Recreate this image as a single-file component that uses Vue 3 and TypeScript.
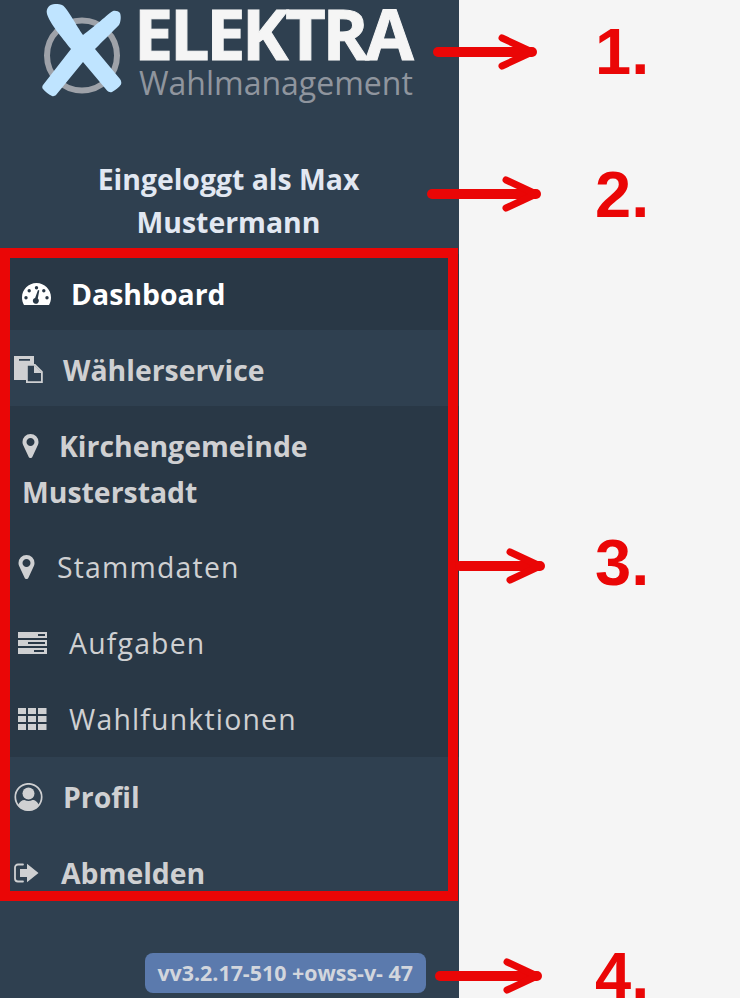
<script setup lang="ts">
const arrows: { x1: number; x2: number; y: number }[] = [
  { x1: 438, x2: 532, y: 52 },
  { x1: 432, x2: 536, y: 194 },
  { x1: 460, x2: 540, y: 566 },
  { x1: 440, x2: 537, y: 976 },
]
const marks: { label: string; top: number }[] = [
  { label: '1.', top: 14 },
  { label: '2.', top: 157 },
  { label: '3.', top: 525 },
  { label: '4.', top: 938 },
]
</script>

<template>
  <div class="page">
    <aside class="sidebar">
      <header class="brand">
        <svg class="brand-mark" viewBox="0 0 80 96" width="80" height="96" aria-hidden="true">
          <circle cx="40" cy="53.500" r="35" fill="none" stroke="#9ea2a9" stroke-width="6" />
          <path fill="#bfe4ff" d="M5 12C3.500 6 8 2 13 2c3 0 6 .3 8 1.500 4 2.500 14 21 20 29.500l12 14 25 30c1.500 2 1.500 4 1 5.500-2 3-6 6-9 7.500-2 .5-3.500 0-5-1.500L41 60 29 47C20 36 7 20 5 12Z" />
          <path fill="#bfe4ff" d="M78 11c-1.500-2-4.500-2.500-7-2-4 2-20 17-30 24L29 47 1 83c-1 1.500-1 3 0 4 2 2.500 6 5.500 9 7 1.500.5 3 0 4-1l27-33 12-13c8-8 19-19 24-24 1.500-2.500 2.500-8 1-12Z" />
        </svg>
        <div class="brand-text">
          <div class="brand-name">ELEKTRA</div>
          <div class="brand-sub">Wahlmanagement</div>
        </div>
      </header>

      <p class="login">Eingeloggt als Max Mustermann</p>

      <nav class="nav">
        <a class="item item-active item-first">
          <svg class="ico ico-gauge" viewBox="0 0 29 22" width="29" height="22" aria-hidden="true">
            <path fill-rule="evenodd" fill="#fff" d="M14.500 0C6.500 0 0 6.500 0 14.500c0 2.800.7 5.400 2 7.500h25c1.300-2.100 2-4.700 2-7.500C29 6.500 22.500 0 14.500 0ZM14.500 3a1.700 1.700 0 1 1 0 3.400 1.700 1.700 0 0 1 0-3.400ZM7.200 6a1.700 1.700 0 1 1 0 3.400 1.700 1.700 0 0 1 0-3.400ZM21.800 6a1.700 1.700 0 1 1 0 3.400 1.700 1.700 0 0 1 0-3.400ZM4 13a1.700 1.700 0 1 1 0 3.400A1.700 1.700 0 0 1 4 13ZM25 13a1.700 1.700 0 1 1 0 3.400 1.700 1.700 0 0 1 0-3.400ZM16 7l1.300.4-1.500 8.100a3 3 0 1 1-2.700-.6L16 7Z" />
          </svg>
          <span>Dashboard</span>
        </a>
        <a class="item item-files">
          <svg class="ico" viewBox="0 0 29 28" width="29" height="28" aria-hidden="true">
            <path fill="#cfd0d2" fill-rule="evenodd" d="M0 0h20v8h-8v16H0ZM5 3v1.800h11V3Z" />
            <path fill="none" stroke="#cfd0d2" stroke-width="1.800" d="M12.900 8.900h8l7 7v10.200h-15Z" />
            <path fill="#cfd0d2" d="M20 9l8 8h-8Z" />
          </svg>
          <span>Wählerservice</span>
        </a>
        <div class="group">
          <a class="item item-title">
            <svg class="ico-inline" viewBox="0 128 1024 1536" width="17" height="24" aria-hidden="true">
              <path fill="#cfd0d2" d="M768 640q0-106-75-181t-181-75-181 75-75 181 75 181 181 75 181-75 75-181zm256 0q0 109-33 179l-364 774q-16 33-47.500 52t-67.500 19-67.500-19-46.500-52l-365-774q-33-70-33-179 0-212 150-362t362-150 362 150 150 362z" />
            </svg><span class="title-text">Kirchengemeinde Musterstadt</span>
          </a>
          <a class="sub sub-pin">
            <svg class="ico" viewBox="0 128 1024 1536" width="17" height="24" aria-hidden="true">
              <path fill="#cfd0d2" d="M768 640q0-106-75-181t-181-75-181 75-75 181 75 181 181 75 181-75 75-181zm256 0q0 109-33 179l-364 774q-16 33-47.500 52t-67.500 19-67.500-19-46.500-52l-365-774q-33-70-33-179 0-212 150-362t362-150 362 150 150 362z" />
            </svg>
            <span>Stammdaten</span>
          </a>
          <a class="sub">
            <svg class="ico" viewBox="0 0 29 22" width="29" height="22" aria-hidden="true">
              <path fill="#cfd0d2" fill-rule="evenodd" d="M0 0h29v6H0ZM20 2v2h7V2ZM0 8h29v6H0ZM10 10v2h17v-2ZM0 16h29v6H0ZM16 18v2h10v-2Z" />
            </svg>
            <span>Aufgaben</span>
          </a>
          <a class="sub">
            <svg class="ico" viewBox="0 0 29 22" width="29" height="22" aria-hidden="true">
              <path fill="#cfd0d2" d="M0 0h8v6H0ZM10 0h8v6h-8ZM20 0h8.500v6H20ZM0 8h8v6H0ZM10 8h8v6h-8ZM20 8h8.500v6H20ZM0 16h8v6H0ZM10 16h8v6h-8ZM20 16h8.500v6H20Z" />
            </svg>
            <span>Wahlfunktionen</span>
          </a>
        </div>
        <a class="item item-profile">
          <svg class="ico" viewBox="0 0 29 28" width="29" height="28" aria-hidden="true">
            <circle cx="14.500" cy="14" r="13.200" fill="none" stroke="#cfd0d2" stroke-width="1.700" />
            <circle cx="14.500" cy="10.500" r="6" fill="#cfd0d2" />
            <path fill="#cfd0d2" d="M4 22.500c1-3.500 4-5.500 6.500-5.500 2.500 1.400 5.500 1.400 8 0 2.500 0 5.500 2 6.500 5.500-2.500 3-6 4.800-10.500 4.800S6.500 25.500 4 22.500Z" />
          </svg>
          <span>Profil</span>
        </a>
        <a class="item item-logout">
          <svg class="ico" viewBox="0 0 25 20" width="25" height="20" aria-hidden="true">
            <path fill="none" stroke="#cfd0d2" stroke-width="1.800" stroke-linecap="round" d="M9 1.500H4A3 3 0 0 0 1 4.500v11a3 3 0 0 0 3 3h5" />
            <path fill="#cfd0d2" d="M6 6h7V0.800L24.500 10 13 19.200V14H6Z" />
          </svg>
          <span>Abmelden</span>
        </a>
      </nav>

      <footer class="footer">
        <span class="version">vv3.2.17-510 +owss-v- 47</span>
      </footer>
    </aside>

    <div class="red-box" aria-hidden="true"></div>
    <svg class="arrows" viewBox="0 0 740 998" width="740" height="998" aria-hidden="true">
      <g v-for="a in arrows" :key="a.y" fill="none" stroke="#ea0606" stroke-linecap="round" stroke-linejoin="round">
        <path :d="`M${a.x1} ${a.y}H${a.x2}`" stroke-width="10" />
        <path :d="`M${a.x2 - 30} ${a.y - 14}L${a.x2} ${a.y}L${a.x2 - 30} ${a.y + 14}`" stroke-width="7" />
      </g>
    </svg>
    <span v-for="m in marks" :key="m.label" class="mark" :style="{ top: m.top + 'px' }">{{ m.label }}</span>
  </div>
</template>

<style scoped>
.page {
  position: relative;
  width: 740px;
  height: 998px;
  overflow: hidden;
  background: #f5f5f5;
  font-family: "Open Sans", "Liberation Sans", sans-serif;
}
.sidebar {
  display: flex;
  flex-direction: column;
  width: 459px;
  height: 998px;
  background: #2f4050;
}
.brand {
  display: flex;
  align-items: flex-start;
  height: 112px;
  padding-left: 42px;
  box-sizing: border-box;
}
.brand-mark {
  flex: none;
  margin-top: 2px;
}
.brand-text {
  margin-left: 12px;
}
.brand-name {
  margin-top: 3px;
  font-size: 70px;
  line-height: 60px;
  font-weight: 700;
  letter-spacing: -3.300px;
  color: #f5f5f5;
  -webkit-text-stroke: 1px #f5f5f5;
}
.brand-sub {
  margin-left: 5px;
  font-size: 32px;
  line-height: 40px;
  color: #8f959e;
}
.login {
  margin: 46px 0 0 78.500px;
  width: 300px;
  height: 96px;
  text-align: center;
  font-size: 28.400px;
  line-height: 43px;
  font-weight: 700;
  color: #e2e8f2;
}
.nav {
  display: flex;
  flex-direction: column;
}
.item {
  display: flex;
  align-items: center;
  height: 76px;
  padding-top: 3px;
  box-sizing: border-box;
  font-size: 28.400px;
  font-weight: 700;
  color: #cfd0d2;
}
.item-active {
  background: #293846;
  color: #fff;
}
.item-first {
  padding-left: 22px;
}
.item-first .ico {
  margin-right: 20px;
}
.item-files {
  padding-left: 14px;
}
.item-files .ico {
  margin-right: 20px;
}
.group {
  background: #293846;
  height: 351px;
}
.item-title {
  display: block;
  height: auto;
  width: 420px;
  padding: 17px 0 14px 22px;
  line-height: 46px;
}
.ico-inline {
  vertical-align: -1px;
  margin-right: 20px;
}
.sub {
  display: flex;
  align-items: center;
  height: 76px;
  padding-left: 18px;
  font-size: 28.400px;
  letter-spacing: 1.200px;
  color: #cfd0d2;
}
.sub .ico {
  margin-right: 22px;
}
.item-profile {
  padding-left: 14px;
}
.item-profile .ico {
  margin-right: 20px;
}
.item-logout {
  padding-left: 14px;
}
.item-logout .ico {
  margin-right: 22px;
}
.ico {
  flex: none;
  display: block;
}
.footer {
  display: flex;
  justify-content: flex-end;
  margin-top: auto;
  padding: 0 33px 5px 0;
}
.version {
  display: block;
  height: 40px;
  padding: 0 13px 0 12px;
  border-radius: 8px;
  background: #5b7aad;
  font-size: 21.400px;
  line-height: 40px;
  font-weight: 700;
  color: #d2d6dd;
  white-space: nowrap;
}
.red-box {
  position: absolute;
  left: 0;
  top: 248px;
  width: 458px;
  height: 653px;
  box-sizing: border-box;
  border: 10px solid #ea0606;
}
.arrows {
  position: absolute;
  left: 0;
  top: 0;
}
.mark {
  position: absolute;
  left: 595px;
  font-family: "Liberation Sans", sans-serif;
  font-size: 65px;
  line-height: 75px;
  font-weight: 700;
  color: #ea0606;
}
</style>
